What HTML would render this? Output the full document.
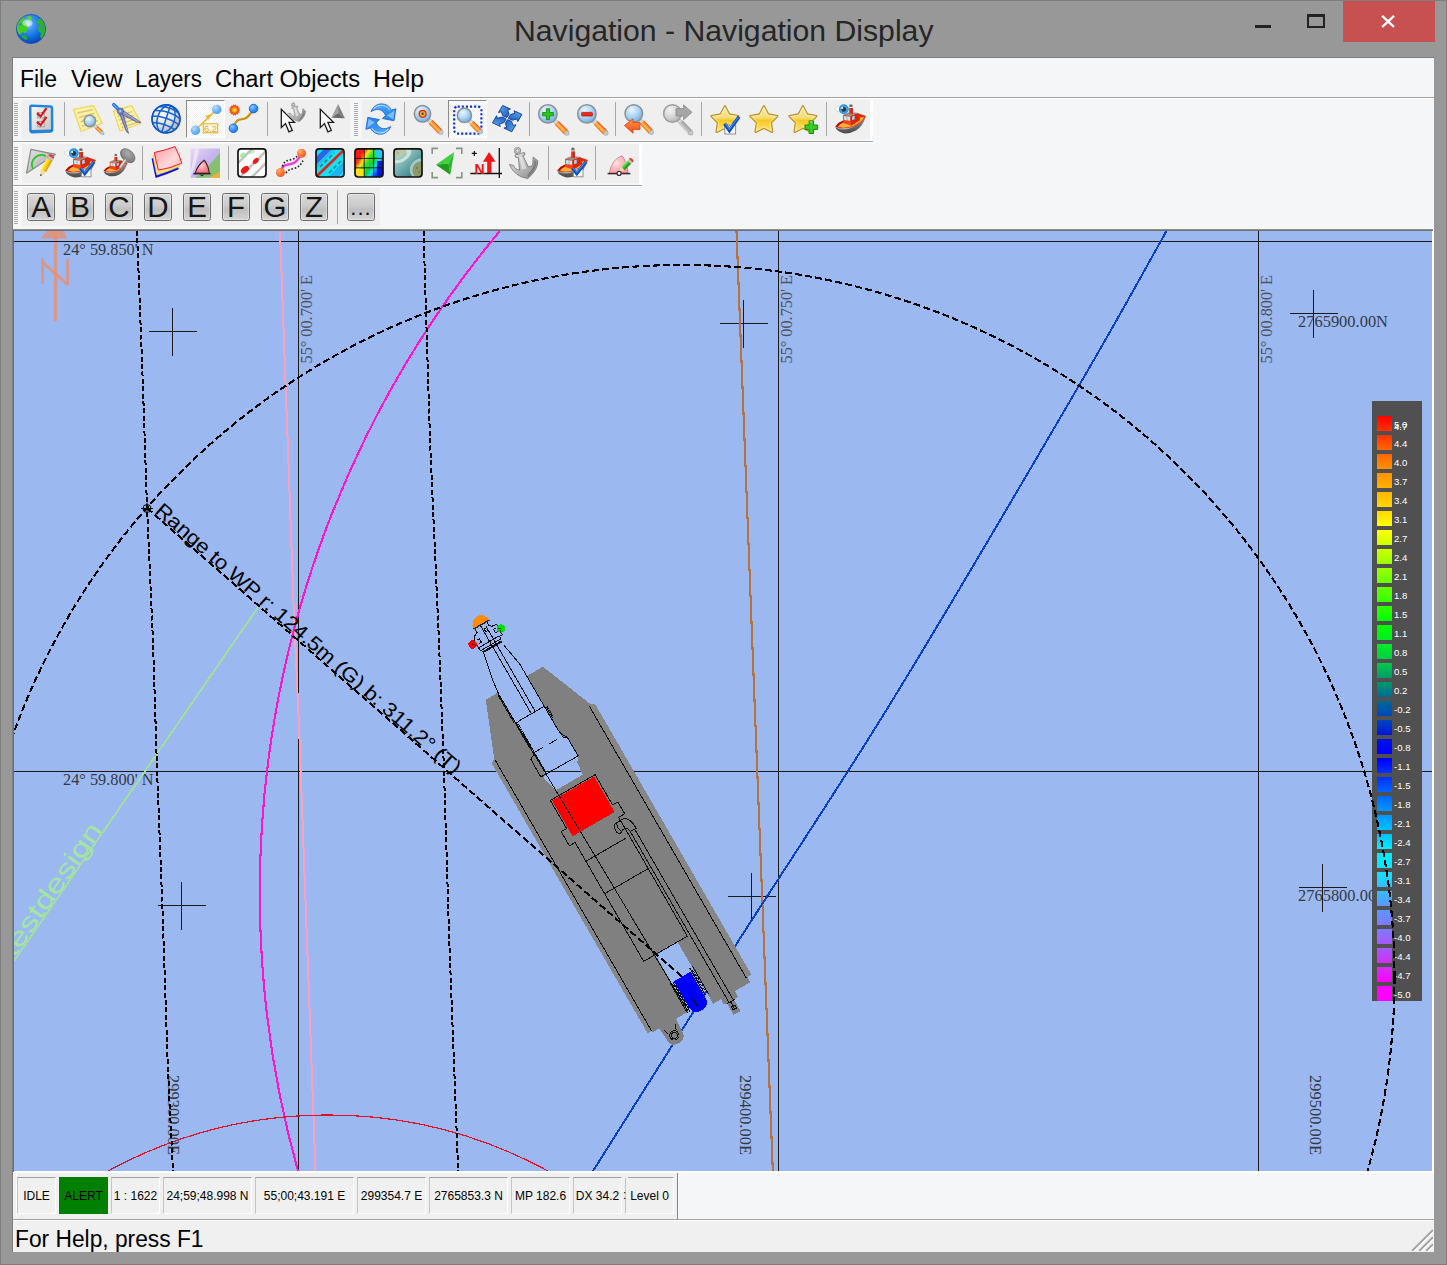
<!DOCTYPE html>
<html><head><meta charset="utf-8"><title>Navigation - Navigation Display</title>
<style>
html,body{margin:0;padding:0;}
body{width:1447px;height:1265px;overflow:hidden;background:#989898;position:relative;font-family:"Liberation Sans",sans-serif;}
.abs{position:absolute;}
.t{position:absolute;white-space:pre;transform-origin:0 0;line-height:1;}
#frame{position:absolute;left:0;top:0;width:1445px;height:1263px;border:1px solid #7d7d7d;}
#client{position:absolute;left:13px;top:58px;width:1421px;height:1194px;background:#f5f6f7;}
.band{position:absolute;background:#efefef;}
.hl{position:absolute;height:1px;}
.vl{position:absolute;width:1px;}
.grip{position:absolute;width:4px;background:repeating-linear-gradient(to bottom,#a9a9a9 0,#a9a9a9 1px,transparent 1px,transparent 2px);}
.sep{position:absolute;width:1px;background:#a8a8a8;}
.ico{position:absolute;width:32px;height:32px;overflow:visible;}
.lbtn{position:absolute;width:26px;height:26px;border:1px solid #6c6c6c;border-radius:2.5px;background:linear-gradient(#dadada,#cbcbcb 45%,#bfbfbf 60%,#d4d4d4);box-shadow:inset 0 0 0 1px rgba(255,255,255,.3);}
.pan{position:absolute;top:1177px;height:37px;border-top:1px solid #a0a0a0;border-left:1px solid #c4c4c4;border-right:1px solid #fff;border-bottom:1px solid #fff;box-sizing:border-box;background:#f0f0f0;}
</style></head>
<body>
<div id="frame"></div>
<div id="titlebar">
<svg class="abs" style="left:15px;top:13px" width="32" height="32" viewBox="0 0 32 32">
<defs><radialGradient id="gl" cx="40%" cy="32%" r="70%"><stop offset="0" stop-color="#cfe6ff"/><stop offset=".25" stop-color="#4a9cf5"/><stop offset=".7" stop-color="#0a6ae0"/><stop offset="1" stop-color="#0a3fb0"/></radialGradient>
<clipPath id="glc"><circle cx="16" cy="16" r="14.2"/></clipPath></defs>
<circle cx="16" cy="16" r="14.6" fill="url(#gl)" stroke="#1c4fb5" stroke-width=".8"/>
<g clip-path="url(#glc)" fill="#3fc41c">
<path d="M3 9 L8 4 L10 6 L9 9 L12 12 L12 18 L10 20 L7 19 L6 22 L4 21 L1 16 Z" fill="#45cc20"/>
<path d="M3.5 11 L6 10 L7 12 L5 13 Z" fill="#2a86ee"/>
<path d="M12 3.5 L16 3 L17 6 L15 9 L13 7 Z" fill="#5ad428"/>
<path d="M6 23 L9 22 L12 24 L12 27 L9 26 Z" fill="#2fb01a"/>
<path d="M26 5 L28 8 L30 12 L30 22 L27 26 L25 24 L26 20 L24 19 L23 15 L25 12 L22 10 L23 7 Z" fill="#2db51a"/>
<path d="M26.5 14 L28 13 L28 17 L27 17 Z" fill="#2a86ee"/>
</g>
<ellipse cx="12.5" cy="10" rx="5" ry="3.6" fill="#fff" opacity=".45"/>
</svg>
<span class="t" style="left:513.6px;top:16.5px;font-size:28.6px;color:#262626;transform:scaleX(1.0558);">Navigation - Navigation Display</span>
<div class="abs" style="left:1255px;top:24.5px;width:16px;height:3.5px;background:#222"></div>
<div class="abs" style="left:1307px;top:14px;width:14px;height:9px;border:2px solid #222;border-top-width:3px;box-sizing:content-box"></div>
<div class="abs" style="left:1343px;top:1px;width:92px;height:41px;background:#c75050"></div>
<svg class="abs" style="left:1380px;top:14px" width="18" height="16" viewBox="0 0 18 16"><path d="M2.2 1.8 L14 13 M14 1.8 L2.2 13" stroke="#fff" stroke-width="2.4" fill="none"/></svg>
</div>
<div class="abs" style="left:12px;top:57px;width:1422px;height:1195px;background:#7d7e81"></div>
<div id="client"></div>
<div id="menubar">
<span class="t" style="left:20.1px;top:68.0px;font-size:23.5px;color:#000;transform:scaleX(0.9769);">File</span>
<span class="t" style="left:71.4px;top:68.0px;font-size:23.5px;color:#000;transform:scaleX(1.0215);">View</span>
<span class="t" style="left:135.4px;top:68.0px;font-size:23.5px;color:#000;transform:scaleX(0.9469);">Layers</span>
<span class="t" style="left:215.4px;top:68.0px;font-size:23.5px;color:#000;transform:scaleX(1.0092);">Chart Objects</span>
<span class="t" style="left:373.1px;top:68.0px;font-size:23.5px;color:#000;transform:scaleX(1.0570);">Help</span>
</div>
<div class="hl" style="left:13px;top:97px;width:1421px;background:#a3a3a3"></div>
<div class="hl" style="left:13px;top:98px;width:1421px;background:#ffffff"></div>
<div id="toolbars">
<div class="band" style="left:22px;top:100px;width:848px;height:39px"></div>
<div class="abs" style="left:350px;top:100px;width:12px;height:39px;background:#f5f6f7"></div>
<div class="abs" style="left:870px;top:100px;width:3px;height:41px;background:#fff"></div>
<div class="hl" style="left:13px;top:141px;width:860px;background:#a3a3a3"></div>
<div class="hl" style="left:13px;top:142px;width:860px;background:#fff"></div>
<div class="band" style="left:22px;top:144px;width:617px;height:39px"></div>
<div class="abs" style="left:639px;top:144px;width:3px;height:41px;background:#fff"></div>
<div class="hl" style="left:13px;top:185px;width:629px;background:#a3a3a3"></div>
<div class="hl" style="left:13px;top:186px;width:629px;background:#fff"></div>
<div class="band" style="left:22px;top:188px;width:358px;height:38px"></div>
<div class="grip" style="left:14px;top:103px;height:33px"></div>
<div class="grip" style="left:354px;top:103px;height:33px"></div>
<div class="grip" style="left:14px;top:147px;height:33px"></div>
<div class="grip" style="left:14px;top:191px;height:33px"></div>
<svg width="0" height="0" style="position:absolute"><defs>
<radialGradient id="lens" cx="38%" cy="30%" r="75%"><stop offset="0" stop-color="#eaf6ff"/><stop offset=".55" stop-color="#a9d3f2"/><stop offset="1" stop-color="#6fa8d8"/></radialGradient>
<radialGradient id="lensg" cx="38%" cy="30%" r="75%"><stop offset="0" stop-color="#f4f4f4"/><stop offset=".6" stop-color="#d2d2d2"/><stop offset="1" stop-color="#b0b0b0"/></radialGradient>
<linearGradient id="hand" x1="0" y1="0" x2="1" y2="0"><stop offset="0" stop-color="#f4641a"/><stop offset=".45" stop-color="#ffc455"/><stop offset="1" stop-color="#ee4c10"/></linearGradient>
<linearGradient id="handg" x1="0" y1="0" x2="1" y2="0"><stop offset="0" stop-color="#d8d8d8"/><stop offset="1" stop-color="#9a9a9a"/></linearGradient>
<radialGradient id="bball" cx="35%" cy="30%" r="80%"><stop offset="0" stop-color="#b8dcff"/><stop offset=".6" stop-color="#6ab2f8"/><stop offset="1" stop-color="#3f95ee"/></radialGradient>
<radialGradient id="bball2" cx="35%" cy="30%" r="80%"><stop offset="0" stop-color="#8cc6ff"/><stop offset=".6" stop-color="#2f8df5"/><stop offset="1" stop-color="#166fe0"/></radialGradient>
<radialGradient id="oball" cx="35%" cy="30%" r="80%"><stop offset="0" stop-color="#ffb070"/><stop offset=".6" stop-color="#ff7030"/><stop offset="1" stop-color="#f04a10"/></radialGradient>
<linearGradient id="star" x1="0" y1="0" x2="0" y2="1"><stop offset="0" stop-color="#f6e9a8"/><stop offset=".45" stop-color="#f3dc78"/><stop offset=".55" stop-color="#f7c81e"/><stop offset="1" stop-color="#f9e27a"/></linearGradient>
<linearGradient id="blu" x1="0" y1="0" x2=".6" y2="1"><stop offset="0" stop-color="#6cbcff"/><stop offset=".5" stop-color="#3a96f6"/><stop offset="1" stop-color="#2a84ee"/></linearGradient>
<linearGradient id="blu2" x1="0" y1="0" x2="1" y2="1"><stop offset="0" stop-color="#6ab0f4"/><stop offset="1" stop-color="#0f4fb4"/></linearGradient>
<linearGradient id="silver" x1="0" y1="0" x2="1" y2="1"><stop offset="0" stop-color="#f4f4f4"/><stop offset=".5" stop-color="#b9b9b9"/><stop offset="1" stop-color="#858585"/></linearGradient>
<linearGradient id="chk" x1="0" y1="0" x2="1" y2="1"><stop offset="0" stop-color="#fafafa"/><stop offset="1" stop-color="#c4c4c4"/></linearGradient>
<linearGradient id="hull" x1="0" y1="0" x2="0" y2="1"><stop offset="0" stop-color="#9a9a9a"/><stop offset="1" stop-color="#4a4a4a"/></linearGradient>
<linearGradient id="pinkg" x1="0" y1="0" x2="1" y2="1"><stop offset="0" stop-color="#ff9aa0"/><stop offset=".6" stop-color="#ffd8da"/><stop offset="1" stop-color="#ffb0b4"/></linearGradient>
<radialGradient id="wglobe" cx="40%" cy="35%" r="70%"><stop offset="0" stop-color="#ffffff"/><stop offset=".6" stop-color="#dcdcdc"/><stop offset="1" stop-color="#a8a8a8"/></radialGradient>
<linearGradient id="rain" x1="0" y1="0.2" x2="1" y2="0.8"><stop offset="0" stop-color="#ff1010"/><stop offset=".18" stop-color="#ff3010"/><stop offset=".3" stop-color="#ffe020"/><stop offset=".45" stop-color="#30e020"/><stop offset=".6" stop-color="#10d040"/><stop offset=".72" stop-color="#10e0f0"/><stop offset=".85" stop-color="#1050f0"/><stop offset="1" stop-color="#0010d0"/></linearGradient>
<linearGradient id="sea" x1="0" y1="0" x2="1" y2="1"><stop offset="0" stop-color="#cfe4dc"/><stop offset=".4" stop-color="#7fb8b8"/><stop offset=".7" stop-color="#4f8f98"/><stop offset="1" stop-color="#2f6068"/></linearGradient>
<linearGradient id="pencil" x1="0" y1="0" x2="1" y2="0"><stop offset="0" stop-color="#fff080"/><stop offset=".5" stop-color="#ffd000"/><stop offset="1" stop-color="#d89800"/></linearGradient>
<linearGradient id="gpencil" x1="0" y1="0" x2="1" y2="0"><stop offset="0" stop-color="#a0f080"/><stop offset=".5" stop-color="#40c030"/><stop offset="1" stop-color="#208818"/></linearGradient>
<linearGradient id="tri" x1="0" y1="0" x2="1" y2="1"><stop offset="0" stop-color="#e4e4e4"/><stop offset="1" stop-color="#a2a2a2"/></linearGradient>
<linearGradient id="arr" x1="0" y1="0" x2="0" y2="1"><stop offset="0" stop-color="#ff9a50"/><stop offset="1" stop-color="#f04a10"/></linearGradient>
<linearGradient id="bellbg" x1="0" y1="0" x2="1" y2="1"><stop offset="0" stop-color="#e8d8f4"/><stop offset=".5" stop-color="#c4b4ee"/><stop offset="1" stop-color="#b8a8f0"/></linearGradient>
<radialGradient id="bellp" cx="40%" cy="35%" r="70%"><stop offset="0" stop-color="#ffd0d4"/><stop offset="1" stop-color="#f06878"/></radialGradient>
<radialGradient id="dome" cx="35%" cy="40%" r="80%"><stop offset="0" stop-color="#ffe0e4"/><stop offset="1" stop-color="#f48a98"/></radialGradient>
<radialGradient id="dish" cx="40%" cy="35%" r="70%"><stop offset="0" stop-color="#b0b0b0"/><stop offset="1" stop-color="#6c6c6c"/></radialGradient>
<pattern id="dither" width="2" height="2" patternUnits="userSpaceOnUse"><rect width="2" height="2" fill="#ffffff"/><rect width="1" height="1" fill="#eeeeee"/><rect x="1" y="1" width="1" height="1" fill="#eeeeee"/></pattern>
</defs></svg>
<svg class="ico" style="left:25px;top:103px" viewBox="0 0 32 32"><g transform="translate(16.2 16) scale(.93) translate(-16 -16)"><path d="M5.6 1.6 L25.8 2.6 Q27.6 2.8 27.6 4.6 L27.8 27.4 Q27.8 29.4 25.8 29.5 L6.4 30.2 Q4.4 30.2 4.4 28.2 L4.2 3.4 Q4.2 1.6 5.6 1.6 Z" fill="url(#chk)" stroke="#1c86e2" stroke-width="2.6" stroke-linejoin="round"/><path d="M4.6 28.5 L27.4 27.8" stroke="#0a5cb8" stroke-width="1.2" opacity=".7"/><rect x="12.4" y="9.2" width="6.8" height="5.6" fill="#fdfdfd" stroke="#8e8e96" stroke-width="1"/><rect x="12.4" y="18.8" width="6.8" height="5.6" fill="#fdfdfd" stroke="#8e8e96" stroke-width="1"/><path d="M11.4 9.7 L15.4 13.2 L21.6 4.4" stroke="#e01010" stroke-width="2.3" fill="none"/><path d="M11.4 19.1 L15.4 22.6 L21.6 13.8" stroke="#e01010" stroke-width="2.3" fill="none"/></g></svg>
<div class="sep" style="left:64px;top:102px;height:34px"></div>
<svg class="ico" style="left:72px;top:103px" viewBox="0 0 32 32"><path d="M1.5 6.2 L21.4 2.6 L30.3 20.3 L9.1 28.5 Z" fill="#fbf2a4" stroke="#f0d256" stroke-width="1.1" stroke-linejoin="round"/><path d="M5.4 10.1 L20.8 6.7" stroke="#d8c684" stroke-width="1.5"/><path d="M7.0 14.5 L22.5 10.3" stroke="#d8c684" stroke-width="1.5"/><path d="M8.5 18.8 L24.3 14.0" stroke="#d8c684" stroke-width="1.5"/><path d="M10.1 23.2 L26.0 17.6" stroke="#d8c684" stroke-width="1.5"/><g transform="translate(22.65,22.62) rotate(-46.4)"><rect x="-1.29" y="-0.6" width="2.58" height="3.4" fill="#d4d8dc" stroke="#8a9096" stroke-width=".5"/><rect x="-1.9" y="2.4" width="3.8" height="6.67" fill="url(#hand)"/><path d="M-1.9 9.07 h3.8 l-0.53 2.2 l-1.37 1.6 l-1.37 -1.6 z" fill="#c8ccd0" stroke="#8a9096" stroke-width=".5"/></g><circle cx="17.8" cy="18" r="5.7" fill="url(#lens)" stroke="#8a9298" stroke-width="1.5"/></svg>
<svg class="ico" style="left:111px;top:103px" viewBox="0 0 32 32"><path d="M2.4 7.9 L20.6 2.6 L30 20.3 L8.9 27.9 Z" fill="#fbf2a4" stroke="#f0d256" stroke-width="1.1" stroke-linejoin="round"/><path d="M6.6 13.2 L21.1 8.6" stroke="#d8c684" stroke-width="1.5"/><path d="M8.0 17.1 L22.9 12.2" stroke="#d8c684" stroke-width="1.5"/><path d="M9.4 21.1 L24.8 15.8" stroke="#d8c684" stroke-width="1.5"/><path d="M10.6 24.6 L26.4 19.1" stroke="#d8c684" stroke-width="1.5"/><path d="M7.6 8.6 L11.4 8 L17.6 30.4 L15.4 28.6 Z" fill="#7479b0" stroke="#484d84" stroke-width=".6" stroke-linejoin="round"/><path d="M9 10.6 L11 6.8 L30 19.4 L27 19.8 Z" fill="#8489be" stroke="#484d84" stroke-width=".6" stroke-linejoin="round"/><path d="M9.8 9.4 L16.4 28.4" stroke="#b4b8e0" stroke-width=".8" opacity=".8"/><path d="M11.4 8.4 L27.6 19" stroke="#c0c4e8" stroke-width=".8" opacity=".8"/><path d="M2.8 1.7 L7.4 6.2" stroke="#1c72e0" stroke-width="3.6" stroke-linecap="round"/><path d="M2.6 1.5 L6.6 5.4" stroke="#6ab0ff" stroke-width="1.1" stroke-linecap="round"/><circle cx="9.4" cy="8.2" r="3.2" fill="#7c80b4" stroke="#484d84" stroke-width=".6"/><circle cx="9.4" cy="8.2" r="1.9" fill="#4a9af0"/><circle cx="9.2" cy="8" r=".8" fill="#f0f8ff"/></svg>
<svg class="ico" style="left:150px;top:103px" viewBox="0 0 32 32"><circle cx="16" cy="15.9" r="14.2" fill="url(#wglobe)"/><g fill="none" stroke="#1464d4" stroke-width="1.5" transform="rotate(18 16 15.9)"><circle cx="16" cy="15.9" r="14"/><ellipse cx="16" cy="15.9" rx="8.6" ry="14"/><path d="M16 1.9 V29.9"/><path d="M2.6 11.4 Q16 6.4 29.4 11.4 M2 17.4 Q16 13 30 17.4 M4.2 23.4 Q16 20 27.8 23.4 M6 6.4 Q16 2.4 26 6.4"/></g><circle cx="16" cy="15.9" r="14" fill="none" stroke="#0f52c0" stroke-width="1.2"/></svg>
<div class="abs" style="left:186px;top:100px;width:37px;height:36px;border-top:1px solid #8a8a8a;border-left:1px solid #8a8a8a;border-right:1px solid #fff;border-bottom:1px solid #fff;background:repeating-conic-gradient(#ffffff 0% 25%, #f0f0f0 0% 50%) 0 0/2px 2px"></div>
<svg class="ico" style="left:189px;top:103px" viewBox="0 0 32 32"><path d="M8.5 25 L25 9" stroke="#e9b628" stroke-width="1.5"/><path d="M21.8 11.2 L16.3 13 L19.8 16.8 Z" fill="#e9b628"/><circle cx="6.4" cy="27.3" r="4.7" fill="url(#bball)"/><circle cx="27.7" cy="6.4" r="4.7" fill="url(#bball)"/><rect x="14.3" y="20.8" width="14.4" height="9" fill="#fdf8e4" stroke="#e3b22a" stroke-width="1.1"/><text x="21.5" y="28.6" font-size="9.5" fill="#e0aa1c" text-anchor="middle" font-family="Liberation Sans, sans-serif">6.2</text></svg>
<svg class="ico" style="left:228px;top:103px" viewBox="0 0 32 32"><path d="M6.6 22.5 C8 14.5 14 17.5 18 15 C22 12.5 23 9.5 25 7.4" stroke="#c8920e" stroke-width="2.2" fill="none"/><circle cx="5.4" cy="25.3" r="4.3" fill="url(#bball2)" stroke="#1a66d6" stroke-width=".9"/><circle cx="25.6" cy="5.6" r="4.3" fill="url(#bball2)" stroke="#1a66d6" stroke-width=".9"/><path d="M12.40 7.00 L10.89 8.00 L11.82 9.56 L10.02 9.81 L10.18 11.61 L8.45 11.05 L7.81 12.75 L6.50 11.50 L5.19 12.75 L4.55 11.05 L2.82 11.61 L2.98 9.81 L1.18 9.56 L2.11 8.00 L0.60 7.00 L2.11 6.00 L1.18 4.44 L2.98 4.19 L2.82 2.39 L4.55 2.95 L5.19 1.25 L6.50 2.50 L7.81 1.25 L8.45 2.95 L10.18 2.39 L10.02 4.19 L11.82 4.44 L10.89 6.00 Z" fill="#f0501c"/><circle cx="6.5" cy="7" r="4.6" fill="#f2571e"/><circle cx="6.5" cy="7" r="2.8" fill="#ff9a20"/><circle cx="6.5" cy="7" r="1.5" fill="#ffe030"/></svg>
<div class="sep" style="left:267px;top:102px;height:34px"></div>
<svg class="ico" style="left:275px;top:103px" viewBox="0 0 32 32"><g transform="translate(13.2,-0.4) scale(0.6)"><path d="M.4 17.5 L4.6 18.4 Q5.6 22.4 10.6 23 L9.3 10.4 L6.6 10.3 L6 8 L9.2 7.2 L12.6 6.2 L15.6 5.6 L16 7.8 L13.8 8.4 L19.4 19.8 Q23 20 23.8 17 L24.2 10 L28.8 13.8 Q29.4 22.4 18.8 31.6 Q6 30 .4 17.5 Z" fill="url(#silver)" stroke="#6e6e6e" stroke-width=".8" stroke-linejoin="round"/><path d="M10.8 10 L12.8 22.6 L17.6 21.6 L12.6 9.4 Z" fill="#f4f4f4" opacity=".55"/><path d="M27.6 14.4 Q28 21.6 19 30.2 L18.6 28 Q25.4 21 25.4 12.6 Z" fill="#5c5c5c" opacity=".55"/><circle cx="8.4" cy="3.5" r="2.4" fill="none" stroke="#7a7a7a" stroke-width="2.2"/><circle cx="8.2" cy="3.3" r="2.4" fill="none" stroke="#dedede" stroke-width=".9"/><path d="M8.2 5.6 L9.4 7.4 L12.4 6.4 L10.6 4.8 Z" fill="#a8a8a8"/></g><path d="M6.30 6.20 L6.30 24.40 L10.50 20.50 L13.90 28.80 L17.30 27.40 L13.90 19.40 L19.50 19.40 Z" fill="#fdfdfd" stroke="#1c1c1c" stroke-width="1.3" stroke-linejoin="miter"/></svg>
<svg class="ico" style="left:314px;top:103px" viewBox="0 0 32 32"><path d="M24 1.1 L17.4 14.7 L24.3 10 Z" fill="#a2a2a2"/><path d="M24 1.1 L24.3 10 L30.9 15.2 Z" fill="#7e7e7e"/><path d="M17.4 14.7 L24.3 10 L30.9 15.2 Z" fill="#6a6a6a"/><path d="M6.30 6.20 L6.30 24.40 L10.50 20.50 L13.90 28.80 L17.30 27.40 L13.90 19.40 L19.50 19.40 Z" fill="#fdfdfd" stroke="#1c1c1c" stroke-width="1.3" stroke-linejoin="miter"/></svg>
<svg class="ico" style="left:365px;top:103px" viewBox="0 0 32 32"><path d="M6.1 8.6 C8.2 3.2 12.6 .9 16.4 .9 C21 .9 24.6 3.4 26.4 7.2 L30.9 5.8 L29 17.7 L17.4 15.5 L20.6 12.6 C19.4 9.4 16.8 6.6 13.4 6.4 C10.6 6.3 8.2 7.2 6.1 8.6 Z" fill="url(#blu)" stroke="#1b68d8" stroke-width=".9" stroke-linejoin="round"/><path d="M8.6 6 C11 3 14 2.2 16.6 2.2 C20.4 2.4 23.4 4.4 25.2 7.4" stroke="#c4e4ff" stroke-width="1.1" fill="none" opacity=".8"/><path d="M22 12.6 L29.6 7.4 L28.2 16.4 Z" fill="#a4d4ff" opacity=".7"/><g transform="rotate(180 15.9 16.05)"><path d="M6.1 8.6 C8.2 3.2 12.6 .9 16.4 .9 C21 .9 24.6 3.4 26.4 7.2 L30.9 5.8 L29 17.7 L17.4 15.5 L20.6 12.6 C19.4 9.4 16.8 6.6 13.4 6.4 C10.6 6.3 8.2 7.2 6.1 8.6 Z" fill="url(#blu)" stroke="#1b68d8" stroke-width=".9" stroke-linejoin="round"/><path d="M8.6 6 C11 3 14 2.2 16.6 2.2 C20.4 2.4 23.4 4.4 25.2 7.4" stroke="#c4e4ff" stroke-width="1.1" fill="none" opacity=".8"/><path d="M22 12.6 L29.6 7.4 L28.2 16.4 Z" fill="#a4d4ff" opacity=".7"/></g></svg>
<div class="sep" style="left:404px;top:102px;height:34px"></div>
<svg class="ico" style="left:412px;top:103px" viewBox="0 0 32 32"><g transform="translate(16.99,17.32) rotate(-44.9)"><rect x="-1.90" y="-0.6" width="3.81" height="3.4" fill="#d4d8dc" stroke="#8a9096" stroke-width=".5"/><rect x="-2.8" y="2.4" width="5.6" height="13.28" fill="url(#hand)"/><path d="M-2.8 15.68 h5.6 l-0.78 2.2 l-2.02 1.6 l-2.02 -1.6 z" fill="#c8ccd0" stroke="#8a9096" stroke-width=".5"/></g><circle cx="10.5" cy="10.8" r="8.200000000000001" fill="url(#lens)" stroke="#8a9298" stroke-width="1.5"/><circle cx="10.6" cy="10.8" r="4.1" fill="#e02a14"/><circle cx="10.6" cy="10.8" r="2.8" fill="#f0a818"/><circle cx="10.6" cy="10.8" r="1.9" fill="#e8c820"/><circle cx="10.6" cy="10.8" r="1.2" fill="#2a3c9c"/></svg>
<div class="abs" style="left:448px;top:100px;width:37px;height:36px;border-top:1px solid #8a8a8a;border-left:1px solid #8a8a8a;border-right:1px solid #fff;border-bottom:1px solid #fff;background:repeating-conic-gradient(#ffffff 0% 25%, #f0f0f0 0% 50%) 0 0/2px 2px"></div>
<svg class="ico" style="left:451px;top:103px" viewBox="0 0 32 32"><rect x="3.2" y="3.6" width="27.2" height="27" rx="3.5" fill="none" stroke="#0c2ed0" stroke-width="2.1" stroke-dasharray="2.1 2"/><g transform="translate(19.06,18.20) rotate(-44.3)"><rect x="-1.90" y="-0.6" width="3.81" height="3.4" fill="#d4d8dc" stroke="#8a9096" stroke-width=".5"/><rect x="-2.8" y="2.4" width="5.6" height="11.06" fill="url(#hand)"/><path d="M-2.8 13.46 h5.6 l-0.78 2.2 l-2.02 1.6 l-2.02 -1.6 z" fill="#c8ccd0" stroke="#8a9096" stroke-width=".5"/></g><circle cx="13.4" cy="12.4" r="7.1" fill="url(#lens)" stroke="#8a9298" stroke-width="1.5"/></svg>
<svg class="ico" style="left:490px;top:103px" viewBox="0 0 32 32"><g transform="translate(17.2,15.6) matrix(0.95,-0.27,0.294,0.85,0,0)" fill="url(#blu2)" stroke="#0e3f94" stroke-width=".9" stroke-linejoin="round"><path d="M0 -15.5 L6.3 -9.2 L3.3 -9.2 L3.3 -4.4 L0 -1.2 L-3.3 -4.4 L-3.3 -9.2 L-6.3 -9.2 Z"/><g transform="rotate(90)"><path d="M0 -15.5 L6.3 -9.2 L3.3 -9.2 L3.3 -4.4 L0 -1.2 L-3.3 -4.4 L-3.3 -9.2 L-6.3 -9.2 Z"/></g><g transform="rotate(180)"><path d="M0 -15.5 L6.3 -9.2 L3.3 -9.2 L3.3 -4.4 L0 -1.2 L-3.3 -4.4 L-3.3 -9.2 L-6.3 -9.2 Z"/></g><g transform="rotate(270)"><path d="M0 -15.5 L6.3 -9.2 L3.3 -9.2 L3.3 -4.4 L0 -1.2 L-3.3 -4.4 L-3.3 -9.2 L-6.3 -9.2 Z"/></g></g></svg>
<div class="sep" style="left:529px;top:102px;height:34px"></div>
<svg class="ico" style="left:537px;top:103px" viewBox="0 0 32 32"><g transform="translate(18.08,18.15) rotate(-44.7)"><rect x="-1.90" y="-0.6" width="3.81" height="3.4" fill="#d4d8dc" stroke="#8a9096" stroke-width=".5"/><rect x="-2.8" y="2.4" width="5.6" height="13.20" fill="url(#hand)"/><path d="M-2.8 15.60 h5.6 l-0.78 2.2 l-2.02 1.6 l-2.02 -1.6 z" fill="#c8ccd0" stroke="#8a9096" stroke-width=".5"/></g><circle cx="10.9" cy="10.9" r="9.200000000000001" fill="url(#lens)" stroke="#8a9298" stroke-width="1.5"/><path d="M9.4 5.8 h3.2 v3.8 h3.8 v3.2 h-3.8 v3.8 h-3.2 v-3.8 h-3.8 v-3.2 h3.8 z" fill="#30c818" stroke="#128a0c" stroke-width=".9" stroke-linejoin="round"/></svg>
<svg class="ico" style="left:576px;top:103px" viewBox="0 0 32 32"><g transform="translate(18.08,18.15) rotate(-44.7)"><rect x="-1.90" y="-0.6" width="3.81" height="3.4" fill="#d4d8dc" stroke="#8a9096" stroke-width=".5"/><rect x="-2.8" y="2.4" width="5.6" height="13.20" fill="url(#hand)"/><path d="M-2.8 15.60 h5.6 l-0.78 2.2 l-2.02 1.6 l-2.02 -1.6 z" fill="#c8ccd0" stroke="#8a9096" stroke-width=".5"/></g><circle cx="10.9" cy="10.9" r="9.200000000000001" fill="url(#lens)" stroke="#8a9298" stroke-width="1.5"/><rect x="5.6" y="9.4" width="10.8" height="3.6" rx=".8" fill="#f02a14" stroke="#c01408" stroke-width=".8"/></svg>
<div class="sep" style="left:615px;top:102px;height:34px"></div>
<svg class="ico" style="left:623px;top:103px" viewBox="0 0 32 32"><g transform="translate(17.49,17.66) rotate(-43.0)"><rect x="-1.90" y="-0.6" width="3.81" height="3.4" fill="#d4d8dc" stroke="#8a9096" stroke-width=".5"/><rect x="-2.8" y="2.4" width="5.6" height="12.27" fill="url(#hand)"/><path d="M-2.8 14.67 h5.6 l-0.78 2.2 l-2.02 1.6 l-2.02 -1.6 z" fill="#c8ccd0" stroke="#8a9096" stroke-width=".5"/></g><circle cx="10.8" cy="10.5" r="8.8" fill="url(#lens)" stroke="#8a9298" stroke-width="1.5"/><path d="M1.4 22.6 L10 15.8 L10 19.4 L17 19.4 L17 26.4 L10 26.4 L10 30.2 Z" fill="url(#arr)" stroke="#d84408" stroke-width=".8" stroke-linejoin="round"/></svg>
<svg class="ico" style="left:662px;top:103px" viewBox="0 0 32 32"><g transform="translate(17.13,17.62) rotate(-43.4)"><rect x="-1.90" y="-0.6" width="3.81" height="3.4" fill="#d4d8dc" stroke="#8a9096" stroke-width=".5"/><rect x="-2.8" y="2.4" width="5.6" height="13.26" fill="url(#handg)"/><path d="M-2.8 15.66 h5.6 l-0.78 2.2 l-2.02 1.6 l-2.02 -1.6 z" fill="#c8ccd0" stroke="#8a9096" stroke-width=".5"/></g><circle cx="10.4" cy="10.5" r="8.8" fill="url(#lensg)" stroke="#9c9c9c" stroke-width="1.5"/><path d="M30 9.3 L21.6 1.8 L21.6 5.6 L14 5.6 L14 13 L21.6 13 L21.6 16.8 Z" fill="#a6a6a6" stroke="#8c8c8c" stroke-width=".8" stroke-linejoin="round"/></svg>
<div class="sep" style="left:701px;top:102px;height:34px"></div>
<svg class="ico" style="left:709px;top:103px" viewBox="0 0 32 32"><path d="M15.90 3.20 L20.25 11.41 L29.41 13.01 L22.94 19.69 L24.25 28.89 L15.90 24.80 L7.55 28.89 L8.86 19.69 L2.39 13.01 L11.55 11.41 Z" fill="url(#star)" stroke="#b48e2a" stroke-width="2.2" stroke-linejoin="round"/><path d="M15.90 3.20 L20.25 11.41 L29.41 13.01 L22.94 19.69 L24.25 28.89 L15.90 24.80 L7.55 28.89 L8.86 19.69 L2.39 13.01 L11.55 11.41 Z" fill="url(#star)"/><path d="M15.90 5.20 L19.54 12.38 L27.50 13.63 L21.80 19.32 L23.07 27.27 L15.90 23.60 L8.73 27.27 L10.00 19.32 L4.30 13.63 L12.26 12.38 Z" fill="none" stroke="#fff8d0" stroke-width=".8" opacity=".55" stroke-linejoin="round"/><rect x="15.8" y="22.2" width="10.8" height="8.8" fill="#fdfdfd" stroke="#8e8e96" stroke-width="1"/><path d="M15.6 20.8 L20.4 27.6 L30 13.8" stroke="#0e4fc2" stroke-width="3.4" fill="none" stroke-linejoin="miter"/><path d="M16.2 20.400000000000002 L20.4 26.200000000000003 L29.4 14.0" stroke="#3f88ee" stroke-width="1.19" fill="none"/></svg>
<svg class="ico" style="left:748px;top:103px" viewBox="0 0 32 32"><path d="M15.90 3.20 L20.25 11.41 L29.41 13.01 L22.94 19.69 L24.25 28.89 L15.90 24.80 L7.55 28.89 L8.86 19.69 L2.39 13.01 L11.55 11.41 Z" fill="url(#star)" stroke="#b48e2a" stroke-width="2.2" stroke-linejoin="round"/><path d="M15.90 3.20 L20.25 11.41 L29.41 13.01 L22.94 19.69 L24.25 28.89 L15.90 24.80 L7.55 28.89 L8.86 19.69 L2.39 13.01 L11.55 11.41 Z" fill="url(#star)"/><path d="M15.90 5.20 L19.54 12.38 L27.50 13.63 L21.80 19.32 L23.07 27.27 L15.90 23.60 L8.73 27.27 L10.00 19.32 L4.30 13.63 L12.26 12.38 Z" fill="none" stroke="#fff8d0" stroke-width=".8" opacity=".55" stroke-linejoin="round"/></svg>
<svg class="ico" style="left:787px;top:103px" viewBox="0 0 32 32"><path d="M15.90 3.20 L20.25 11.41 L29.41 13.01 L22.94 19.69 L24.25 28.89 L15.90 24.80 L7.55 28.89 L8.86 19.69 L2.39 13.01 L11.55 11.41 Z" fill="url(#star)" stroke="#b48e2a" stroke-width="2.2" stroke-linejoin="round"/><path d="M15.90 3.20 L20.25 11.41 L29.41 13.01 L22.94 19.69 L24.25 28.89 L15.90 24.80 L7.55 28.89 L8.86 19.69 L2.39 13.01 L11.55 11.41 Z" fill="url(#star)"/><path d="M15.90 5.20 L19.54 12.38 L27.50 13.63 L21.80 19.32 L23.07 27.27 L15.90 23.60 L8.73 27.27 L10.00 19.32 L4.30 13.63 L12.26 12.38 Z" fill="none" stroke="#fff8d0" stroke-width=".8" opacity=".55" stroke-linejoin="round"/><path d="M22.1 17.9 h4.4 v4.1 h4.1 v4.4 h-4.1 v4.1 h-4.4 v-4.1 h-4.1 v-4.4 h4.1 z" fill="#38cc20" stroke="#148a10" stroke-width="1" stroke-linejoin="round"/><path d="M22.900000000000002 18.9 h2.8000000000000003" stroke="#b0f090" stroke-width=".9"/></svg>
<div class="sep" style="left:826px;top:102px;height:34px"></div>
<svg class="ico" style="left:834px;top:103px" viewBox="0 0 32 32"><path d="M0.20000000000000018 6.2 Q6.4 -1.2000000000000002 15.0 5.6000000000000005 Q7.4 12.600000000000001 0.20000000000000018 6.2 Z" fill="#fcfcfc" stroke="#c4c4c4" stroke-width=".6"/><circle cx="9.8" cy="6.2" r="4.8" fill="#3aa2f0"/><circle cx="9.8" cy="6.2" r="4.4" fill="none" stroke="#2a86dc" stroke-width=".8"/><circle cx="9.8" cy="6.4" r="2.4" fill="#333"/><circle cx="8.200000000000001" cy="5.0" r="1" fill="#fff"/><g transform="translate(0,0) scale(1.0)"><path d="M1.3 23.6 Q2 28.4 9.5 30.3 Q16 31 22 27.6 Q29 23 31.9 13.2 L30.6 13.6 Q26 22 14 25.4 Q6 26.6 1.3 23.6 Z" fill="url(#hull)"/><path d="M1.3 23.6 Q6 27 14 25.6 Q26 22.2 31 13.6" stroke="#b4b4b4" stroke-width=".9" fill="none"/><path d="M1.4 23.4 Q4 19.4 9 17.6 L24 10.2 L31.9 13 Q28.6 20.4 19 23.8 Q8 27 1.4 23.4 Z" fill="#e22a10"/><path d="M1.6 23.2 Q4 19.6 9 17.8 L9.4 20 Q6 21.6 4 24.2 Z" fill="#b80808"/><path d="M3.8 23.6 Q6 21 9.2 19.6 L17.2 22.4 L25.8 17 L26 14.4 L30.4 13.9 Q27.4 19.6 19 22.9 Q9.4 26 3.8 23.6 Z" fill="#f2b23a"/><path d="M9.1 11.7 L17 12.6 L17.2 22.6 L9.2 20.1 Z" fill="#f2441c"/><path d="M17 12.6 L23.9 9.9 L25.7 17.4 L17.2 22.6 Z" fill="#dc2608"/><path d="M9.1 11.7 L15.2 9.3 L23.9 9.7 L17 12.7 Z" fill="#8c8c8c"/><path d="M10.1 13.1 L16 13.8 L16 17.8 L10.1 16.9 Z" fill="#b4f0ff"/><path d="M13 13.5 v3.9" stroke="#f2441c" stroke-width=".6" opacity=".7"/><path d="M18.1 13.6 L20.6 12.6 L20.8 16.2 L18.1 17.2 Z" fill="#94dcff"/><path d="M15.1 4.6 h3.6 V10.4 q-1.8 .8 -3.6 0 z" fill="#ea3a18"/><path d="M17.5 4.6 h1.2 V10.4 q-.6 .3 -1.2 .4 z" fill="#b81a08"/><rect x="15.1" y="4.0" width="3.6" height="1" fill="#f6f6f6"/><path d="M15.3 1.7999999999999998 q1.6 -1.2 3.2 0 v2.2 h-3.2 z" fill="#707070"/></g></svg>
<svg class="ico" style="left:25px;top:147px" viewBox="0 0 32 32"><path d="M5.9 2.3 L30.6 7.3 L1.5 26.2 Z" fill="url(#tri)" stroke="#8c8c8c" stroke-width="1.2" stroke-linejoin="round"/><path d="M8.1 21.9 A9.4 9.4 0 0 1 20.8 9.2" stroke="#24c624" stroke-width="1.7" fill="none"/><g transform="translate(26.4,9.2) rotate(29)"><rect x="-3" y="3.4" width="6" height="13.4" fill="url(#pencil)"/><path d="M-3 16.8 L0 23 L3 16.8 Z" fill="#f4d8a0"/><path d="M-1 20.9 L0 23 L1 20.9 Z" fill="#333"/><rect x="-3" y="1" width="6" height="2.6" fill="#c8c8c8" stroke="#909090" stroke-width=".4"/><path d="M-3 1 V-.6 Q0 -2.6 3 -.6 V1 Z" fill="#e63a28"/></g></svg>
<svg class="ico" style="left:64px;top:147px" viewBox="0 0 32 32"><path d="M0.20000000000000018 6.2 Q6.4 -1.2000000000000002 15.0 5.6000000000000005 Q7.4 12.600000000000001 0.20000000000000018 6.2 Z" fill="#fcfcfc" stroke="#c4c4c4" stroke-width=".6"/><circle cx="9.8" cy="6.2" r="4.8" fill="#3aa2f0"/><circle cx="9.8" cy="6.2" r="4.4" fill="none" stroke="#2a86dc" stroke-width=".8"/><circle cx="9.8" cy="6.4" r="2.4" fill="#333"/><circle cx="8.200000000000001" cy="5.0" r="1" fill="#fff"/><g transform="translate(0,0) scale(1.0)"><path d="M1.3 23.6 Q2 28.4 9.5 30.3 Q16 31 22 27.6 Q29 23 31.9 13.2 L30.6 13.6 Q26 22 14 25.4 Q6 26.6 1.3 23.6 Z" fill="url(#hull)"/><path d="M1.3 23.6 Q6 27 14 25.6 Q26 22.2 31 13.6" stroke="#b4b4b4" stroke-width=".9" fill="none"/><path d="M1.4 23.4 Q4 19.4 9 17.6 L24 10.2 L31.9 13 Q28.6 20.4 19 23.8 Q8 27 1.4 23.4 Z" fill="#e22a10"/><path d="M1.6 23.2 Q4 19.6 9 17.8 L9.4 20 Q6 21.6 4 24.2 Z" fill="#b80808"/><path d="M3.8 23.6 Q6 21 9.2 19.6 L17.2 22.4 L25.8 17 L26 14.4 L30.4 13.9 Q27.4 19.6 19 22.9 Q9.4 26 3.8 23.6 Z" fill="#f2b23a"/><path d="M9.1 11.7 L17 12.6 L17.2 22.6 L9.2 20.1 Z" fill="#f2441c"/><path d="M17 12.6 L23.9 9.9 L25.7 17.4 L17.2 22.6 Z" fill="#dc2608"/><path d="M9.1 11.7 L15.2 9.3 L23.9 9.7 L17 12.7 Z" fill="#8c8c8c"/><path d="M10.1 13.1 L16 13.8 L16 17.8 L10.1 16.9 Z" fill="#b4f0ff"/><path d="M13 13.5 v3.9" stroke="#f2441c" stroke-width=".6" opacity=".7"/><path d="M18.1 13.6 L20.6 12.6 L20.8 16.2 L18.1 17.2 Z" fill="#94dcff"/><path d="M15.1 4.6 h3.6 V10.4 q-1.8 .8 -3.6 0 z" fill="#ea3a18"/><path d="M17.5 4.6 h1.2 V10.4 q-.6 .3 -1.2 .4 z" fill="#b81a08"/><rect x="15.1" y="4.0" width="3.6" height="1" fill="#f6f6f6"/><path d="M15.3 1.7999999999999998 q1.6 -1.2 3.2 0 v2.2 h-3.2 z" fill="#707070"/></g><rect x="17.4" y="22.2" width="9.6" height="7.6" fill="#fdfdfd" stroke="#8e8e96" stroke-width="1"/><path d="M16.4 21.2 L20.8 26.6 L30 14.8" stroke="#0e4fc2" stroke-width="3.2" fill="none" stroke-linejoin="miter"/><path d="M17.0 20.8 L20.8 25.200000000000003 L29.4 15.0" stroke="#3f88ee" stroke-width="1.12" fill="none"/></svg>
<svg class="ico" style="left:103px;top:147px" viewBox="0 0 32 32"><g transform="translate(24.7,8.7) rotate(42)"><ellipse cx="0" cy="0" rx="8.4" ry="5.6" fill="url(#dish)" stroke="#5c5c5c" stroke-width=".6"/><ellipse cx="0" cy="-.4" rx="6.8" ry="4.2" fill="none" stroke="#a8a8a8" stroke-width=".7" stroke-dasharray="1 1"/><ellipse cx="0" cy="-.2" rx="4.4" ry="2.6" fill="none" stroke="#9a9a9a" stroke-width=".7" stroke-dasharray="1 1"/><ellipse cx="0" cy="0" rx="2" ry="1.1" fill="none" stroke="#a0a0a0" stroke-width=".6" stroke-dasharray="1 1"/></g><g transform="translate(-0.4,5.6) scale(0.78)"><path d="M1.3 23.6 Q2 28.4 9.5 30.3 Q16 31 22 27.6 Q29 23 31.9 13.2 L30.6 13.6 Q26 22 14 25.4 Q6 26.6 1.3 23.6 Z" fill="url(#hull)"/><path d="M1.3 23.6 Q6 27 14 25.6 Q26 22.2 31 13.6" stroke="#b4b4b4" stroke-width=".9" fill="none"/><path d="M1.4 23.4 Q4 19.4 9 17.6 L24 10.2 L31.9 13 Q28.6 20.4 19 23.8 Q8 27 1.4 23.4 Z" fill="#e22a10"/><path d="M1.6 23.2 Q4 19.6 9 17.8 L9.4 20 Q6 21.6 4 24.2 Z" fill="#b80808"/><path d="M3.8 23.6 Q6 21 9.2 19.6 L17.2 22.4 L25.8 17 L26 14.4 L30.4 13.9 Q27.4 19.6 19 22.9 Q9.4 26 3.8 23.6 Z" fill="#f2b23a"/><path d="M9.1 11.7 L17 12.6 L17.2 22.6 L9.2 20.1 Z" fill="#f2441c"/><path d="M17 12.6 L23.9 9.9 L25.7 17.4 L17.2 22.6 Z" fill="#dc2608"/><path d="M9.1 11.7 L15.2 9.3 L23.9 9.7 L17 12.7 Z" fill="#8c8c8c"/><path d="M10.1 13.1 L16 13.8 L16 17.8 L10.1 16.9 Z" fill="#b4f0ff"/><path d="M13 13.5 v3.9" stroke="#f2441c" stroke-width=".6" opacity=".7"/><path d="M18.1 13.6 L20.6 12.6 L20.8 16.2 L18.1 17.2 Z" fill="#94dcff"/><path d="M15.1 5.0 h3.6 V10.4 q-1.8 .8 -3.6 0 z" fill="#ea3a18"/><path d="M17.5 5.0 h1.2 V10.4 q-.6 .3 -1.2 .4 z" fill="#b81a08"/><rect x="15.1" y="4.4" width="3.6" height="1" fill="#f6f6f6"/><path d="M15.3 2.2 q1.6 -1.2 3.2 0 v2.2 h-3.2 z" fill="#707070"/></g><path d="M17.6 20.6 L22.6 13.4" stroke="#8a8a8a" stroke-width="3.8" stroke-linecap="round"/><path d="M17.2 20 L22 13.2" stroke="#e0e0e0" stroke-width="1.5" stroke-linecap="round"/></svg>
<div class="sep" style="left:142px;top:146px;height:34px"></div>
<svg class="ico" style="left:150px;top:147px" viewBox="0 0 32 32"><path d="M1.6 11.5 Q11 9.6 22.2 5.7 Q26.6 14 28.8 22.3 Q17 27.6 5.6 30.9 Q3.2 20 1.6 11.5 Z" fill="#0c0cf4"/><path d="M2.8 8.5 Q12.4 6.5 23.4 2.7 Q27.9 11 30.2 19.3 Q18.4 24.5 6.8 28.1 Q4.4 17 2.8 8.5 Z" fill="#f9e47e" stroke="#ecca4c" stroke-width=".6"/><path d="M4.4 5.5 Q14 3.5 25 -.3 Q29.5 8 31.8 16.3 Q20 21.5 8.4 23.1 Q6 14 4.4 5.5 Z" fill="url(#pinkg)" stroke="#f0162c" stroke-width="1"/></svg>
<svg class="ico" style="left:189px;top:147px" viewBox="0 0 32 32"><rect x="1.5" y="1.5" width="29.5" height="29.2" fill="url(#bellbg)"/><path d="M1.5 30.7 L1.5 24 Q5 12 6 1.5 L10 1.5 Q8 16 1.5 30.7 Z" fill="#f4eef8" opacity=".7"/><path d="M31 5.5 L31 24.4 L21 30.7 L6.2 30.7 Q21 19 31 5.5 Z" fill="#84c06e"/><path d="M31 24.4 L31 30.7 L20.6 30.7 Z" fill="#f2b02c"/><path d="M6.2 26.2 Q8.4 18.4 15.2 13.2 Q19.6 19 20.2 26.2 Z" fill="url(#bellp)" stroke="#40202a" stroke-width="1.1" stroke-linejoin="round"/><path d="M4.4 26.7 H21.6" stroke="#2e2226" stroke-width="1.5"/><circle cx="13" cy="27.6" r="1.6" fill="#2e2226"/><circle cx="13" cy="27.5" r=".6" fill="#78b060"/></svg>
<div class="sep" style="left:228px;top:146px;height:34px"></div>
<svg class="ico" style="left:236px;top:147px" viewBox="0 0 32 32"><clipPath id="cq1"><rect x="2" y="1.8" width="28" height="28.2" rx="3"/></clipPath><rect x="2" y="1.8" width="28" height="28.2" rx="3" fill="#fdfdfd"/><g clip-path="url(#cq1)"><path d="M-2 20 L20 -2 M2 32 L32 2 M12 34 L34 12" stroke="#c4c4c4" stroke-width="2.6"/><ellipse cx="6.7" cy="8.1" rx="3" ry="2" fill="#90e890" opacity=".8" transform="rotate(-40 6.7 8.1)"/><ellipse cx="16.1" cy="5.2" rx="3" ry="1.6" fill="#a0eca0" opacity=".7" transform="rotate(-30 16.1 5.2)"/><ellipse cx="19.8" cy="13.9" rx="3.6" ry="2.3" fill="#f01818" transform="rotate(-45 19.8 13.9)"/><ellipse cx="8.9" cy="22.8" rx="4.6" ry="3" fill="#f01818" transform="rotate(-40 8.9 22.8)"/></g><rect x="2" y="1.8" width="28" height="28.2" rx="3.2" fill="none" stroke="#111" stroke-width="1.7"/></svg>
<svg class="ico" style="left:275px;top:147px" viewBox="0 0 32 32"><path d="M5.4 25.5 C7 18 11 17.6 15.6 17 C21 16.2 23.4 12.4 26.5 6.3" stroke="#f23ad6" stroke-width="2.3" fill="none"/><path d="M7.4 19.4 C9 14 13 13.4 17 12.4 C20 11.6 22 9.8 23.4 7.6" stroke="#222" stroke-width="1.6" fill="none" stroke-dasharray="1.6 1.8"/><path d="M11 26 C13 22.6 16 22.2 19.4 21.4 C23.4 20.4 26 17.6 28 13.6" stroke="#222" stroke-width="1.6" fill="none" stroke-dasharray="1.6 1.8"/><circle cx="5.4" cy="25.5" r="4.5" fill="url(#oball)"/><circle cx="26.5" cy="6.3" r="4.5" fill="url(#oball)"/></svg>
<svg class="ico" style="left:314px;top:147px" viewBox="0 0 32 32"><clipPath id="cq2"><rect x="2" y="1.8" width="28" height="28.2" rx="3"/></clipPath><rect x="2" y="1.8" width="28" height="28.2" rx="3" fill="#12e2f2"/><g clip-path="url(#cq2)"><path d="M-2 14 L14 -2 L22 -2 L-2 22 Z" fill="#2a66ea"/><path d="M-2 22 L22 -2 L26 -2 L-2 26 Z" fill="#30b8f4"/><path d="M12 32 L34 10 L34 20 L22 32 Z" fill="#28a0f0" opacity=".7"/><path d="M6 20 L20 6" stroke="#0e8a96" stroke-width="1.6" stroke-dasharray="4 2.4"/><path d="M15 26 L28 13" stroke="#0e8a96" stroke-width="1.6" stroke-dasharray="4 2.4"/><path d="M3 29 L30 3" stroke="#ee1a1a" stroke-width="2.6"/></g><rect x="2" y="1.8" width="28" height="28.2" rx="3.2" fill="none" stroke="#111" stroke-width="1.7"/></svg>
<svg class="ico" style="left:353px;top:147px" viewBox="0 0 32 32"><clipPath id="cq3"><rect x="2" y="1.8" width="28" height="28.2" rx="3"/></clipPath><rect x="2" y="1.8" width="28" height="28.2" rx="3" fill="url(#rain)"/><g clip-path="url(#cq3)"><path d="M2 2 h6 v10 h-6z" fill="#ff1818"/><path d="M2 22 h9 v8 h-9 z" fill="#ffe020"/><path d="M24 14 h6 v16 h-6 z" fill="#0818d8"/><path d="M22 2 h8 v8 h-8z" fill="#20c8f8"/><path d="M11.2 1 V31 M20.6 1 V31 M1 11.4 H31 M1 20.8 H31" stroke="#101010" stroke-width="1" opacity=".85"/></g><rect x="2" y="1.8" width="28" height="28.2" rx="3.2" fill="none" stroke="#111" stroke-width="1.7"/></svg>
<svg class="ico" style="left:392px;top:147px" viewBox="0 0 32 32"><clipPath id="cq4"><rect x="2" y="1.8" width="28" height="28.2" rx="3"/></clipPath><rect x="2" y="1.8" width="28" height="28.2" rx="3" fill="url(#sea)"/><g clip-path="url(#cq4)"><path d="M2 2 L14 2 Q15 6 11 8 Q8 12 2 11 Z" fill="#b9c8a8"/><path d="M30 14 Q22 15 20 21 Q19 27 24 30 L30 30 Z" fill="#8a9a6a"/><path d="M14 2 Q16 8 12 10 Q8 14 2 13 L2 16 Q10 17 15 12 Q20 8 19 2 Z" fill="#d8ece4" opacity=".8"/><path d="M30 11 Q21 12 18 20 Q17 27 21 30 L24 30 Q19 26 21 20 Q23 15 30 14 Z" fill="#b4d8d0" opacity=".8"/><circle cx="25" cy="21" r="1" fill="#6a7a4a"/><circle cx="27" cy="25" r="1" fill="#6a7a4a"/><circle cx="6" cy="6" r="1" fill="#9aac88"/></g><rect x="2" y="1.8" width="28" height="28.2" rx="3.2" fill="none" stroke="#111" stroke-width="1.7"/></svg>
<svg class="ico" style="left:431px;top:147px" viewBox="0 0 32 32"><path d="M1.2 7 V1.4 H7 M25 1.4 H30.8 V7 M1.2 25 V30.6 H7 M25 30.6 H30.8 V25" stroke="#7f987f" stroke-width="1.6" fill="none"/><path d="M4.9 17.8 L23.1 4.9 L17.6 16.6 Z" fill="#3cd23c"/><path d="M4.9 17.8 L17.6 16.6 L19.3 27.7 Z" fill="#1f9a1f"/><path d="M23.1 4.9 L17.6 16.6 L19.3 27.7 Z" fill="#2ab82a"/></svg>
<svg class="ico" style="left:470px;top:147px" viewBox="0 0 32 32"><path d="M1.8 6.4 H6.8 M4.3 3.9 V8.9" stroke="#111" stroke-width="1.2"/><path d="M29.3 1 V31 M.3 26.5 H32" stroke="#111" stroke-width="1.3"/><path d="M19.1 4.9 L25.4 14.8 L21.4 14.8 L21.4 26 L17.2 26 L17.2 14.8 L13 14.8 Z" fill="#f41414"/><text x="4.6" y="26.6" font-size="14" font-weight="700" fill="#f41414" font-family="Liberation Sans, sans-serif">N</text></svg>
<svg class="ico" style="left:509px;top:147px" viewBox="0 0 32 32"><g transform="translate(0,0) scale(1)"><path d="M.4 17.5 L4.6 18.4 Q5.6 22.4 10.6 23 L9.3 10.4 L6.6 10.3 L6 8 L9.2 7.2 L12.6 6.2 L15.6 5.6 L16 7.8 L13.8 8.4 L19.4 19.8 Q23 20 23.8 17 L24.2 10 L28.8 13.8 Q29.4 22.4 18.8 31.6 Q6 30 .4 17.5 Z" fill="url(#silver)" stroke="#6e6e6e" stroke-width=".8" stroke-linejoin="round"/><path d="M10.8 10 L12.8 22.6 L17.6 21.6 L12.6 9.4 Z" fill="#f4f4f4" opacity=".55"/><path d="M27.6 14.4 Q28 21.6 19 30.2 L18.6 28 Q25.4 21 25.4 12.6 Z" fill="#5c5c5c" opacity=".55"/><circle cx="8.4" cy="3.5" r="2.4" fill="none" stroke="#7a7a7a" stroke-width="2.2"/><circle cx="8.2" cy="3.3" r="2.4" fill="none" stroke="#dedede" stroke-width=".9"/><path d="M8.2 5.6 L9.4 7.4 L12.4 6.4 L10.6 4.8 Z" fill="#a8a8a8"/></g></svg>
<div class="sep" style="left:548px;top:146px;height:34px"></div>
<svg class="ico" style="left:556px;top:147px" viewBox="0 0 32 32"><g transform="translate(0,0) scale(1)"><path d="M1.3 23.6 Q2 28.4 9.5 30.3 Q16 31 22 27.6 Q29 23 31.9 13.2 L30.6 13.6 Q26 22 14 25.4 Q6 26.6 1.3 23.6 Z" fill="url(#hull)"/><path d="M1.3 23.6 Q6 27 14 25.6 Q26 22.2 31 13.6" stroke="#b4b4b4" stroke-width=".9" fill="none"/><path d="M1.4 23.4 Q4 19.4 9 17.6 L24 10.2 L31.9 13 Q28.6 20.4 19 23.8 Q8 27 1.4 23.4 Z" fill="#e22a10"/><path d="M1.6 23.2 Q4 19.6 9 17.8 L9.4 20 Q6 21.6 4 24.2 Z" fill="#b80808"/><path d="M3.8 23.6 Q6 21 9.2 19.6 L17.2 22.4 L25.8 17 L26 14.4 L30.4 13.9 Q27.4 19.6 19 22.9 Q9.4 26 3.8 23.6 Z" fill="#f2b23a"/><path d="M9.1 11.7 L17 12.6 L17.2 22.6 L9.2 20.1 Z" fill="#f2441c"/><path d="M17 12.6 L23.9 9.9 L25.7 17.4 L17.2 22.6 Z" fill="#dc2608"/><path d="M9.1 11.7 L15.2 9.3 L23.9 9.7 L17 12.7 Z" fill="#8c8c8c"/><path d="M10.1 13.1 L16 13.8 L16 17.8 L10.1 16.9 Z" fill="#b4f0ff"/><path d="M13 13.5 v3.9" stroke="#f2441c" stroke-width=".6" opacity=".7"/><path d="M18.1 13.6 L20.6 12.6 L20.8 16.2 L18.1 17.2 Z" fill="#94dcff"/><path d="M15.1 4.0 h3.6 V10.4 q-1.8 .8 -3.6 0 z" fill="#ea3a18"/><path d="M17.5 4.0 h1.2 V10.4 q-.6 .3 -1.2 .4 z" fill="#b81a08"/><rect x="15.1" y="3.4" width="3.6" height="1" fill="#f6f6f6"/><path d="M15.3 1.2 q1.6 -1.2 3.2 0 v2.2 h-3.2 z" fill="#707070"/></g><rect x="17.4" y="22.2" width="9.6" height="7.6" fill="#fdfdfd" stroke="#8e8e96" stroke-width="1"/><path d="M16.4 21.2 L20.8 26.6 L30 14.8" stroke="#0e4fc2" stroke-width="3.2" fill="none" stroke-linejoin="miter"/><path d="M17.0 20.8 L20.8 25.200000000000003 L29.4 15.0" stroke="#3f88ee" stroke-width="1.12" fill="none"/></svg>
<div class="sep" style="left:595px;top:146px;height:34px"></div>
<svg class="ico" style="left:603px;top:147px" viewBox="0 0 32 32"><path d="M6.2 26.2 Q9 12 19.1 8.7 Q24 15 25.2 26.2 Z" fill="url(#dome)" stroke="#c06070" stroke-width=".6"/><path d="M4.6 26.6 H27.4" stroke="#3a2a2a" stroke-width="1.5"/><g transform="translate(28.6,12.8) rotate(46)"><rect x="-2.5" y="3" width="5" height="9.4" fill="url(#gpencil)"/><path d="M-2.5 12.4 L0 17 L2.5 12.4 Z" fill="#f0d8a8"/><rect x="-2.5" y="1.2" width="5" height="2" fill="#c8c8c8"/><path d="M-2.5 1.2 V-.4 Q0 -2 2.5 -.4 V1.2 Z" fill="#e63a28"/></g><circle cx="16.1" cy="26.4" r="2" fill="#fff" stroke="#3a2a2a" stroke-width="1.1"/></svg>
<div class="lbtn" style="left:27px;top:193px"><span style="position:absolute;left:0;width:26px;top:-2.4px;text-align:center;font-size:29.5px;line-height:30px;color:#161616">A</span></div>
<div class="lbtn" style="left:66px;top:193px"><span style="position:absolute;left:0;width:26px;top:-2.4px;text-align:center;font-size:29.5px;line-height:30px;color:#161616">B</span></div>
<div class="lbtn" style="left:105px;top:193px"><span style="position:absolute;left:0;width:26px;top:-2.4px;text-align:center;font-size:29.5px;line-height:30px;color:#161616">C</span></div>
<div class="lbtn" style="left:144px;top:193px"><span style="position:absolute;left:0;width:26px;top:-2.4px;text-align:center;font-size:29.5px;line-height:30px;color:#161616">D</span></div>
<div class="lbtn" style="left:183px;top:193px"><span style="position:absolute;left:0;width:26px;top:-2.4px;text-align:center;font-size:29.5px;line-height:30px;color:#161616">E</span></div>
<div class="lbtn" style="left:222px;top:193px"><span style="position:absolute;left:0;width:26px;top:-2.4px;text-align:center;font-size:29.5px;line-height:30px;color:#161616">F</span></div>
<div class="lbtn" style="left:261px;top:193px"><span style="position:absolute;left:0;width:26px;top:-2.4px;text-align:center;font-size:29.5px;line-height:30px;color:#161616">G</span></div>
<div class="lbtn" style="left:300px;top:193px"><span style="position:absolute;left:0;width:26px;top:-2.4px;text-align:center;font-size:29.5px;line-height:30px;color:#161616">Z</span></div>
<div class="sep" style="left:337px;top:190px;height:34px"></div>
<div class="lbtn" style="left:347px;top:193px"><span style="position:absolute;left:0;width:26px;top:1px;text-align:center;font-size:22px;line-height:26px;color:#111;letter-spacing:1px">...</span></div>
</div>
<div id="map" class="abs" style="left:13px;top:229px;width:1421px;height:944px;background:#fff">
<div class="abs" style="left:0;top:0;width:1420px;height:2px;background:#6f6f6f"></div>
<div class="abs" style="left:0;top:0;width:1px;height:943px;background:#6f6f6f"></div>
<div class="abs" style="left:0;top:0;width:1420px;height:1px;background:#8e8e8e"></div>
<svg class="abs" style="left:1px;top:2px" width="1418" height="940" viewBox="14 231 1418 940" font-family="Liberation Sans, sans-serif">
<rect x="14" y="231" width="1418" height="940" fill="#9bb8f1"/>
<g id="north" fill="#e8906e" stroke="none" fill-opacity=".78"><path d="M47 231 L64 231 L67 238.6 L41 238.6 Z"/><rect x="54" y="231" width="3.2" height="90"/><path d="M41.2 258 L44 258 L44 261.5 L66.2 281.5 L66.2 259 L69 259 L69 285.5 L66.2 285.5 L44 265.5 L44 284 L41.2 284 Z"/></g>
<g id="grid" stroke="#1a1a1a" stroke-width="1" shape-rendering="crispEdges"><line x1="14" y1="241.5" x2="1432" y2="241.5"/><line x1="14" y1="771.5" x2="1432" y2="771.5"/><line x1="298.5" y1="231" x2="298.5" y2="1171"/><line x1="778.5" y1="231" x2="778.5" y2="1171"/><line x1="1258.5" y1="231" x2="1258.5" y2="1171"/><line x1="148.5" y1="331.5" x2="196.5" y2="331.5"/><line x1="172.5" y1="307.5" x2="172.5" y2="355.5"/><line x1="719.5" y1="323.5" x2="767.5" y2="323.5"/><line x1="743.5" y1="299.5" x2="743.5" y2="347.5"/><line x1="1289.5" y1="313.5" x2="1337.5" y2="313.5"/><line x1="1313.5" y1="289.5" x2="1313.5" y2="337.5"/><line x1="157.5" y1="905.5" x2="205.5" y2="905.5"/><line x1="181.5" y1="881.5" x2="181.5" y2="929.5"/><line x1="727.5" y1="896.5" x2="775.5" y2="896.5"/><line x1="751.5" y1="872.5" x2="751.5" y2="920.5"/><line x1="1298.5" y1="887.5" x2="1346.5" y2="887.5"/><line x1="1322.5" y1="863.5" x2="1322.5" y2="911.5"/></g>
<g id="gridlabels" font-family="Liberation Serif, serif" font-size="16" fill="#333a44"><text x="63" y="255" textLength="90.5" lengthAdjust="spacingAndGlyphs">24° 59.850' N</text><text x="63" y="785" textLength="90.5" lengthAdjust="spacingAndGlyphs">24° 59.800' N</text><text x="312" y="363.5" textLength="88.5" lengthAdjust="spacingAndGlyphs" transform="rotate(-90 312 363.5)" fill="#4d545e">55° 00.700' E</text><text x="791.5" y="363.5" textLength="88.5" lengthAdjust="spacingAndGlyphs" transform="rotate(-90 791.5 363.5)" fill="#4d545e">55° 00.750' E</text><text x="1271.5" y="363.5" textLength="88.5" lengthAdjust="spacingAndGlyphs" transform="rotate(-90 1271.5 363.5)" fill="#4d545e">55° 00.800' E</text><text x="1298" y="327" textLength="90" lengthAdjust="spacingAndGlyphs">2765900.00N</text><text x="1298" y="901" textLength="90" lengthAdjust="spacingAndGlyphs">2765800.00N</text><text x="168" y="1075" textLength="80" lengthAdjust="spacingAndGlyphs" transform="rotate(90 168 1075)">299300.00E</text><text x="739.5" y="1075" textLength="80" lengthAdjust="spacingAndGlyphs" transform="rotate(90 739.5 1075)">299400.00E</text><text x="1309.5" y="1075" textLength="80" lengthAdjust="spacingAndGlyphs" transform="rotate(90 1309.5 1075)">299500.00E</text></g>
<path id="pinkline" shape-rendering="crispEdges" d="M280 231 L294 615 L299 725 L315.5 1171" stroke="#ff9fc0" stroke-width="2" fill="none"/>
<path id="magenta" shape-rendering="crispEdges" d="M499.9 231 A1032 1032 0 0 0 298 1171" stroke="#ff14c8" stroke-width="2.1" fill="none"/>
<path id="brown" shape-rendering="crispEdges" d="M736.5 231 L754.5 700 L772.8 1171" stroke="#b5733f" stroke-width="2.1" fill="none"/>
<path id="blueline" shape-rendering="crispEdges" d="M1166.5 231.0 C1151.8 256.9 1124.1 308.4 1078.4 386.6 C1032.8 464.8 950.3 605.9 892.6 700.0 C834.9 794.1 781.9 872.5 732.0 951.0 C682.1 1029.5 616.2 1134.3 593.0 1171.0" stroke="#0a40c4" stroke-width="2" fill="none"/>
<path id="redarc" shape-rendering="crispEdges" d="M108 1171 A460 460 0 0 1 548 1171" stroke="#e0102a" stroke-width="1.2" fill="none"/>
<path id="greenline" shape-rendering="crispEdges" d="M261 603 L14 961" stroke="#9fe09f" stroke-width="2" fill="none"/>
<text id="designlabel" x="2.5" y="-1.5" font-size="26" fill="#a2e6a2" transform="translate(14,961) rotate(-55.2)" textLength="156" lengthAdjust="spacingAndGlyphs">testdesign</text>
<path d="M137 231 L143 388 L147 508 L152.9 640 L157.1 771 L162.3 905 L167.8 1067 L173 1171" stroke="#000" stroke-width="2" stroke-dasharray="5 2.4" fill="none" shape-rendering="crispEdges"/>
<path d="M423.5 231 L430.2 446 L438.9 640 L444 771 L449.2 939 L458.2 1171" stroke="#000" stroke-width="2" stroke-dasharray="5 2.4" fill="none" shape-rendering="crispEdges"/>
<g id="legend"><rect x="1372" y="401" width="50" height="600" fill="#505050"/><defs><linearGradient id="lg0" x1="0" y1="0" x2="0" y2="1"><stop offset="0" stop-color="#ff0000"/><stop offset="1" stop-color="#ff3300"/></linearGradient><linearGradient id="lg1" x1="0" y1="0" x2="0" y2="1"><stop offset="0" stop-color="#ff3300"/><stop offset="1" stop-color="#ff6600"/></linearGradient><linearGradient id="lg2" x1="0" y1="0" x2="0" y2="1"><stop offset="0" stop-color="#ff6600"/><stop offset="1" stop-color="#ff9000"/></linearGradient><linearGradient id="lg3" x1="0" y1="0" x2="0" y2="1"><stop offset="0" stop-color="#ff9000"/><stop offset="1" stop-color="#ffb400"/></linearGradient><linearGradient id="lg4" x1="0" y1="0" x2="0" y2="1"><stop offset="0" stop-color="#ffb400"/><stop offset="1" stop-color="#ffd800"/></linearGradient><linearGradient id="lg5" x1="0" y1="0" x2="0" y2="1"><stop offset="0" stop-color="#ffd800"/><stop offset="1" stop-color="#ffff00"/></linearGradient><linearGradient id="lg6" x1="0" y1="0" x2="0" y2="1"><stop offset="0" stop-color="#ffff00"/><stop offset="1" stop-color="#ccff00"/></linearGradient><linearGradient id="lg7" x1="0" y1="0" x2="0" y2="1"><stop offset="0" stop-color="#ccff00"/><stop offset="1" stop-color="#99ff00"/></linearGradient><linearGradient id="lg8" x1="0" y1="0" x2="0" y2="1"><stop offset="0" stop-color="#99ff00"/><stop offset="1" stop-color="#66ff00"/></linearGradient><linearGradient id="lg9" x1="0" y1="0" x2="0" y2="1"><stop offset="0" stop-color="#66ff00"/><stop offset="1" stop-color="#33ff00"/></linearGradient><linearGradient id="lg10" x1="0" y1="0" x2="0" y2="1"><stop offset="0" stop-color="#33ff00"/><stop offset="1" stop-color="#00ff00"/></linearGradient><linearGradient id="lg11" x1="0" y1="0" x2="0" y2="1"><stop offset="0" stop-color="#00ff00"/><stop offset="1" stop-color="#00ee22"/></linearGradient><linearGradient id="lg12" x1="0" y1="0" x2="0" y2="1"><stop offset="0" stop-color="#00ee22"/><stop offset="1" stop-color="#00cc44"/></linearGradient><linearGradient id="lg13" x1="0" y1="0" x2="0" y2="1"><stop offset="0" stop-color="#00cc44"/><stop offset="1" stop-color="#00996a"/></linearGradient><linearGradient id="lg14" x1="0" y1="0" x2="0" y2="1"><stop offset="0" stop-color="#00996a"/><stop offset="1" stop-color="#006a96"/></linearGradient><linearGradient id="lg15" x1="0" y1="0" x2="0" y2="1"><stop offset="0" stop-color="#006a96"/><stop offset="1" stop-color="#0046b8"/></linearGradient><linearGradient id="lg16" x1="0" y1="0" x2="0" y2="1"><stop offset="0" stop-color="#0046b8"/><stop offset="1" stop-color="#0014e0"/></linearGradient><linearGradient id="lg17" x1="0" y1="0" x2="0" y2="1"><stop offset="0" stop-color="#0014e0"/><stop offset="1" stop-color="#0000ff"/></linearGradient><linearGradient id="lg18" x1="0" y1="0" x2="0" y2="1"><stop offset="0" stop-color="#0000ff"/><stop offset="1" stop-color="#0030ff"/></linearGradient><linearGradient id="lg19" x1="0" y1="0" x2="0" y2="1"><stop offset="0" stop-color="#0030ff"/><stop offset="1" stop-color="#0066ff"/></linearGradient><linearGradient id="lg20" x1="0" y1="0" x2="0" y2="1"><stop offset="0" stop-color="#0066ff"/><stop offset="1" stop-color="#0096ff"/></linearGradient><linearGradient id="lg21" x1="0" y1="0" x2="0" y2="1"><stop offset="0" stop-color="#0096ff"/><stop offset="1" stop-color="#00c0ff"/></linearGradient><linearGradient id="lg22" x1="0" y1="0" x2="0" y2="1"><stop offset="0" stop-color="#00c0ff"/><stop offset="1" stop-color="#00ecff"/></linearGradient><linearGradient id="lg23" x1="0" y1="0" x2="0" y2="1"><stop offset="0" stop-color="#00ecff"/><stop offset="1" stop-color="#10e4ff"/></linearGradient><linearGradient id="lg24" x1="0" y1="0" x2="0" y2="1"><stop offset="0" stop-color="#10e4ff"/><stop offset="1" stop-color="#30beff"/></linearGradient><linearGradient id="lg25" x1="0" y1="0" x2="0" y2="1"><stop offset="0" stop-color="#30beff"/><stop offset="1" stop-color="#5a96ff"/></linearGradient><linearGradient id="lg26" x1="0" y1="0" x2="0" y2="1"><stop offset="0" stop-color="#5a96ff"/><stop offset="1" stop-color="#7f7aff"/></linearGradient><linearGradient id="lg27" x1="0" y1="0" x2="0" y2="1"><stop offset="0" stop-color="#7f7aff"/><stop offset="1" stop-color="#a458ff"/></linearGradient><linearGradient id="lg28" x1="0" y1="0" x2="0" y2="1"><stop offset="0" stop-color="#a458ff"/><stop offset="1" stop-color="#d030f0"/></linearGradient><linearGradient id="lg29" x1="0" y1="0" x2="0" y2="1"><stop offset="0" stop-color="#d030f0"/><stop offset="1" stop-color="#ff00ff"/></linearGradient><linearGradient id="lg30" x1="0" y1="0" x2="0" y2="1"><stop offset="0" stop-color="#ff00ff"/><stop offset="1" stop-color="#ff00ff"/></linearGradient></defs><rect x="1377" y="416" width="15" height="15" fill="url(#lg0)"/><rect x="1377" y="435" width="15" height="15" fill="url(#lg1)"/><rect x="1377" y="454" width="15" height="15" fill="url(#lg2)"/><rect x="1377" y="473" width="15" height="15" fill="url(#lg3)"/><rect x="1377" y="492" width="15" height="15" fill="url(#lg4)"/><rect x="1377" y="511" width="15" height="15" fill="url(#lg5)"/><rect x="1377" y="530" width="15" height="15" fill="url(#lg6)"/><rect x="1377" y="549" width="15" height="15" fill="url(#lg7)"/><rect x="1377" y="568" width="15" height="15" fill="url(#lg8)"/><rect x="1377" y="587" width="15" height="15" fill="url(#lg9)"/><rect x="1377" y="606" width="15" height="15" fill="url(#lg10)"/><rect x="1377" y="625" width="15" height="15" fill="url(#lg11)"/><rect x="1377" y="644" width="15" height="15" fill="url(#lg12)"/><rect x="1377" y="663" width="15" height="15" fill="url(#lg13)"/><rect x="1377" y="682" width="15" height="15" fill="url(#lg14)"/><rect x="1377" y="701" width="15" height="15" fill="url(#lg15)"/><rect x="1377" y="720" width="15" height="15" fill="url(#lg16)"/><rect x="1377" y="739" width="15" height="15" fill="url(#lg17)"/><rect x="1377" y="758" width="15" height="15" fill="url(#lg18)"/><rect x="1377" y="777" width="15" height="15" fill="url(#lg19)"/><rect x="1377" y="796" width="15" height="15" fill="url(#lg20)"/><rect x="1377" y="815" width="15" height="15" fill="url(#lg21)"/><rect x="1377" y="834" width="15" height="15" fill="url(#lg22)"/><rect x="1377" y="853" width="15" height="15" fill="url(#lg23)"/><rect x="1377" y="872" width="15" height="15" fill="url(#lg24)"/><rect x="1377" y="891" width="15" height="15" fill="url(#lg25)"/><rect x="1377" y="910" width="15" height="15" fill="url(#lg26)"/><rect x="1377" y="929" width="15" height="15" fill="url(#lg27)"/><rect x="1377" y="948" width="15" height="15" fill="url(#lg28)"/><rect x="1377" y="967" width="15" height="15" fill="url(#lg29)"/><rect x="1377" y="986" width="15" height="15" fill="url(#lg30)"/><g font-size="9.6" fill="#fff"><text x="1394" y="427.5">5.0</text><text x="1394" y="446.5">4.4</text><text x="1394" y="465.5">4.0</text><text x="1394" y="484.5">3.7</text><text x="1394" y="503.5">3.4</text><text x="1394" y="522.5">3.1</text><text x="1394" y="541.5">2.7</text><text x="1394" y="560.5">2.4</text><text x="1394" y="579.5">2.1</text><text x="1394" y="598.5">1.8</text><text x="1394" y="617.5">1.5</text><text x="1394" y="636.5">1.1</text><text x="1394" y="655.5">0.8</text><text x="1394" y="674.5">0.5</text><text x="1394" y="693.5">0.2</text><text x="1394" y="712.5">-0.2</text><text x="1394" y="731.5">-0.5</text><text x="1394" y="750.5">-0.8</text><text x="1394" y="769.5">-1.1</text><text x="1394" y="788.5">-1.5</text><text x="1394" y="807.5">-1.8</text><text x="1394" y="826.5">-2.1</text><text x="1394" y="845.5">-2.4</text><text x="1394" y="864.5">-2.7</text><text x="1394" y="883.5">-3.1</text><text x="1394" y="902.5">-3.4</text><text x="1394" y="921.5">-3.7</text><text x="1394" y="940.5">-4.0</text><text x="1394" y="959.5">-4.4</text><text x="1394" y="978.5">-4.7</text><text x="1394" y="997.5">-5.0</text><text x="1394" y="430.4">4.7</text></g></g>
<g id="vessel" transform="translate(514.3,683.2) rotate(-30)" stroke-linejoin="miter" shape-rendering="crispEdges">
<path d="M-33 0 L-18.5 0 L-18.5 94 L-22 97 L-17.5 113.5 L13.5 113.5 L15 100 L19 95 L19 74 L14.5 70 L14.5 0 L33 0 L55 55 L55 377 L12 377 L12 305 L-13.5 305 L-13.5 371.5 L-55 371.5 L-55 55 Z" fill="#808080"/>
<path d="M54 55 L59.6 58 L59.6 371 L54 371 Z M-54 55 L-59.6 58 L-59.6 370 L-54 370 Z" fill="#878787"/>
<path d="M-47 371 L-28 371 L-29 388 Q-30 394 -37 394 Q-45 394 -46 388 Z" fill="#808080"/><path d="M21 377 L37 377 L37 383 L32 384 L32 397 L24 397 L24 384 L21 383 Z" fill="#808080"/>
<rect x="-26" y="120.7" width="48.5" height="41" fill="#ff0000"/><path d="M-11 338 L8.5 338 L8.5 367 Q8.5 377 -1.2 377 Q-11 377 -11 367 Z" fill="#0000ff"/>
<g stroke="#111" stroke-width="1" fill="none"><path d="M-55 57 V370 M53.5 57 V371"/><path d="M-17.6 71 L-23.7 74 L-23.9 94.5 L19 94.9 L18.8 73.5 L14.5 70.4"/><path d="M-27.4 152 V119.6 H24.2 V154 M-27.4 152 H-33.6 V168.4 H-27 V305.6 H23.3 V168.2 H30.3 V154.6 H24.2"/><path d="M-26.5 190 H19.5 M-26.5 227.5 H23.3"/><path d="M-18.3 71 L-13.6 371"/><path d="M26.3 186.5 V383 M31.3 187 V383 M28 383 v9 M24 384 h9"/><path d="M14 178 Q14 172 19 172 L26 172 Q33 173 33 186.5 L26.3 186.5 Q26 180 21 181 L17 183 Q14 183 14 178 Z M19 172 Q16 177 19 182"/><path d="M-14 340 L-11 345 M-14.5 344 L-11 349 M-14.5 348 L-11 353 M-14 352 L-11 357 M-14 356 L-11 361 M-13.5 360 L-11 365 M-13 364 L-10.5 369 M-15 338 V372 M-12 338 V372"/><path d="M9 336 L12 341 M9 340 L12 345 M9 344 L12 349 M9 348 L12 353 M9 352 L12.5 357 M9 356 L12.5 361 M12.8 334 V366 M9.5 334 V366"/><path d="M-3 362 V372" stroke-width="1.6"/><circle cx="-37.5" cy="385" r="4.6"/><circle cx="-37.5" cy="385" r="3"/><path d="M-44 375 L-42 381 M-31 375 L-33 381"/><rect x="26" y="389" width="4" height="3.5"/></g>
<g stroke="#111" stroke-width="1" fill="none"><path d="M-11.3 -42 L-17 -14.5 L-19 2 L-18.5 71 M10 -38 L14.3 -14 L14.5 63 L15.5 68 L18.8 73.5"/><path d="M-0.5 -66 V34.5 M4 -63 V34.7"/><path d="M-16 35 H15"/><path d="M-17.3 49 V95 M-16.8 70 H-7 M-1 70 H8.5" /><path d="M-7 -67 L-7 -62 L-10.5 -61 L-13.5 -57 L-13.5 -50 L-12.8 -45 L10.2 -45 L11 -48 L14 -48 L14 -60 L9 -60.5 L7 -63 L7 -67"/><path d="M-13 -48.5 H10.5 M-12.5 -43 H10 M-11.3 -42 H10 M-11 -56 h3 v4 h-3 M12 -57 h-3 v4 h3 M1 -62 h3 v3 h-3 z"/></g>
<path d="M-18.2 35 V63" stroke="#111" stroke-width="3.2" fill="none" stroke-dasharray="1.3 0.7"/><path d="M15.8 36.5 V49" stroke="#111" stroke-width="3.4" fill="none" stroke-dasharray="1.3 0.7"/><path d="M-20 2 V34" stroke="#111" stroke-width="1" fill="none"/><path d="M-8 -67.5 A9 9 0 0 1 10 -67.5 Z" fill="#ff8c00"/><path d="M-8 -67.2 H10" stroke="#222" stroke-width="1.4"/><circle cx="15.8" cy="-54" r="4.2" fill="#00e000"/><circle cx="-16.8" cy="-54.4" r="4.2" fill="#ff0000"/><path d="M13 -56 l3 2.5 l-3 2.5 M-14 -56.5 l-3 2.3 l3 2.3" stroke="#222" stroke-width=".8" fill="none"/></g>
<circle cx="682.5" cy="977" r="712" stroke="#000" stroke-width="2.1" stroke-dasharray="7 3.2" fill="none" shape-rendering="crispEdges"/>
<line x1="147" y1="508" x2="682.5" y2="977" stroke="#000" stroke-width="2.1" stroke-dasharray="7 3.2" shape-rendering="crispEdges"/>
<g stroke="#000" stroke-width="1" fill="none"><circle cx="147" cy="508.5" r="4"/><path d="M141 508.5 H153 M147 502.5 V514.5"/></g>
<text x="0" y="0" font-size="20" fill="#000" transform="translate(147,508) rotate(41.21) translate(8,-1.5)" textLength="399" lengthAdjust="spacingAndGlyphs">Range to WP r: 124.5m (G) b: 311.2° (T)</text>
</svg>
</div>
<div id="statusarea">
<div class="abs" style="left:13px;top:1173px;width:665px;height:46px;background:#f0f0f0"></div>
<div class="vl" style="left:677px;top:1173px;height:46px;background:#868686"></div>
<div class="vl" style="left:16px;top:1174px;height:43px;background:#fff"></div>
<div class="hl" style="left:13px;top:1219px;width:1421px;background:#a3a3a3"></div>
<div class="abs" style="left:13px;top:1220px;width:1421px;height:32px;background:#f0f0f0;border-top:1px solid #fff;box-sizing:border-box"></div>
<div class="pan" style="left:17px;width:39px"><span style="position:absolute;left:0;right:0;top:11px;text-align:center;font-size:12px;line-height:14px;white-space:pre">IDLE</span></div>
<div class="pan" style="left:59px;width:49px;background:#008000;border-color:#008000"><span style="position:absolute;left:0;right:0;top:11px;text-align:center;font-size:12px;line-height:14px;white-space:pre">ALERT</span></div>
<div class="pan" style="left:111px;width:49px"><span style="position:absolute;left:0;right:0;top:11px;text-align:center;font-size:12px;line-height:14px;white-space:pre">1 : 1622</span></div>
<div class="pan" style="left:163px;width:89px"><span style="position:absolute;left:0;right:0;top:11px;text-align:center;font-size:12px;line-height:14px;white-space:pre">24;59;48.998 N</span></div>
<div class="pan" style="left:255px;width:99px"><span style="position:absolute;left:0;right:0;top:11px;text-align:center;font-size:12px;line-height:14px;white-space:pre">55;00;43.191 E</span></div>
<div class="pan" style="left:357px;width:69px"><span style="position:absolute;left:0;right:0;top:11px;text-align:center;font-size:12px;line-height:14px;white-space:pre">299354.7 E</span></div>
<div class="pan" style="left:429px;width:79px"><span style="position:absolute;left:0;right:0;top:11px;text-align:center;font-size:12px;line-height:14px;white-space:pre">2765853.3 N</span></div>
<div class="pan" style="left:511px;width:59px"><span style="position:absolute;left:0;right:0;top:11px;text-align:center;font-size:12px;line-height:14px;white-space:pre">MP 182.6</span></div>
<div class="pan" style="left:573px;width:49px"><span style="position:absolute;left:0;right:0;top:11px;text-align:center;font-size:12px;line-height:14px;white-space:pre">DX 34.2</span></div>
<div class="pan" style="left:625px;width:49px"><span style="position:absolute;left:0;right:0;top:11px;text-align:center;font-size:12px;line-height:14px;white-space:pre">Level 0</span></div>
<div class="abs" style="left:625px;top:1177px;width:3px;height:1px;background:#f0f0f0"></div><div class="abs" style="left:623px;top:1188px;font-size:12px;line-height:14px;color:#000">:</div>
<span class="t" style="left:15.2px;top:1227.6px;font-size:23.5px;color:#000;transform:scaleX(0.9687)">For Help, press F1</span>
<svg class="abs" style="left:1411px;top:1229px" width="22" height="22" viewBox="1412 1230 22 22"><path d="M1414.6 1252 L1434 1232.6 M1421.8 1252 L1434 1239.8 M1428.8 1252 L1434 1246.8" stroke="#fff" stroke-width="1.6"/><path d="M1413 1252 L1434 1231 M1420.2 1252 L1434 1238.2 M1427.2 1252 L1434 1245.2" stroke="#a0a0a0" stroke-width="1.8"/></svg>
</div>
</body></html>
